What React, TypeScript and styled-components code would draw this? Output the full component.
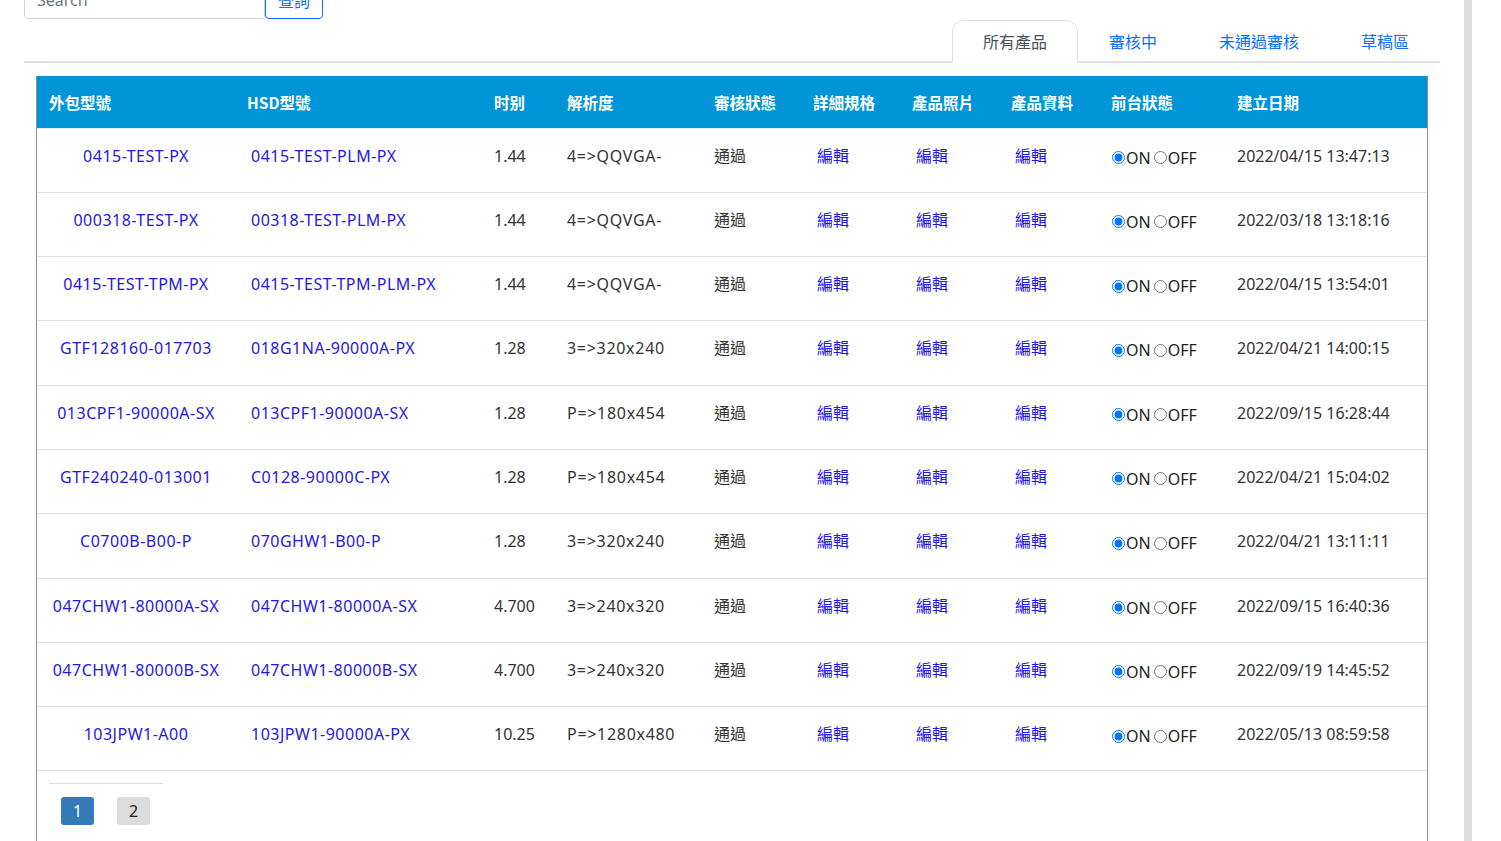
import styled, { createGlobalStyle } from 'styled-components'

const GlobalStyle = createGlobalStyle`
	html, body {
		margin: 0;
		padding: 0;
		background: #fff;
		overflow: hidden;
	}
	body {
		font-family: 'Noto Sans', 'Noto Sans CJK TC', sans-serif;
		color: #333;
		font-size: 16px;
	}
	* {
		box-sizing: border-box;
	}
`

type Producto = {
	externo: string
	hsd: string
	tamano: string
	resolucion: string
	fecha: string
}

const productos: Producto[] = [
	{ externo: '0415-TEST-PX', hsd: '0415-TEST-PLM-PX', tamano: '1.44', resolucion: '4=>QQVGA-', fecha: '2022/04/15 13:47:13' },
	{ externo: '000318-TEST-PX', hsd: '00318-TEST-PLM-PX', tamano: '1.44', resolucion: '4=>QQVGA-', fecha: '2022/03/18 13:18:16' },
	{ externo: '0415-TEST-TPM-PX', hsd: '0415-TEST-TPM-PLM-PX', tamano: '1.44', resolucion: '4=>QQVGA-', fecha: '2022/04/15 13:54:01' },
	{ externo: 'GTF128160-017703', hsd: '018G1NA-90000A-PX', tamano: '1.28', resolucion: '3=>320x240', fecha: '2022/04/21 14:00:15' },
	{ externo: '013CPF1-90000A-SX', hsd: '013CPF1-90000A-SX', tamano: '1.28', resolucion: 'P=>180x454', fecha: '2022/09/15 16:28:44' },
	{ externo: 'GTF240240-013001', hsd: 'C0128-90000C-PX', tamano: '1.28', resolucion: 'P=>180x454', fecha: '2022/04/21 15:04:02' },
	{ externo: 'C0700B-B00-P', hsd: '070GHW1-B00-P', tamano: '1.28', resolucion: '3=>320x240', fecha: '2022/04/21 13:11:11' },
	{ externo: '047CHW1-80000A-SX', hsd: '047CHW1-80000A-SX', tamano: '4.700', resolucion: '3=>240x320', fecha: '2022/09/15 16:40:36' },
	{ externo: '047CHW1-80000B-SX', hsd: '047CHW1-80000B-SX', tamano: '4.700', resolucion: '3=>240x320', fecha: '2022/09/19 14:45:52' },
	{ externo: '103JPW1-A00', hsd: '103JPW1-90000A-PX', tamano: '10.25', resolucion: 'P=>1280x480', fecha: '2022/05/13 08:59:58' },
]

const columnas = [
	{ titulo: '外包型號', ancho: 198 },
	{ titulo: 'HSD型號', ancho: 247 },
	{ titulo: '时别', ancho: 73 },
	{ titulo: '解析度', ancho: 147 },
	{ titulo: '審核狀態', ancho: 99 },
	{ titulo: '詳細規格', ancho: 99 },
	{ titulo: '產品照片', ancho: 99 },
	{ titulo: '產品資料', ancho: 100 },
	{ titulo: '前台狀態', ancho: 126 },
	{ titulo: '建立日期', ancho: 202 },
]

const pestanas = ['所有產品', '審核中', '未通過審核', '草稿區']

export default function App() {
	return (
		<>
			<GlobalStyle />
			<Pagina>
				<Contenido>
					<Buscador>
						<CampoBusqueda placeholder='Search' />
						<BotonBuscar>查詢</BotonBuscar>
					</Buscador>

					<Pestanas>
						{pestanas.map((p, i) => (
							<Pestana key={p} $activa={i === 0}>
								{p}
							</Pestana>
						))}
					</Pestanas>

					<Caja>
						<Tabla>
							<colgroup>
								{columnas.map(c => (
									<col key={c.titulo} style={{ width: c.ancho }} />
								))}
							</colgroup>
							<thead>
								<tr>
									{columnas.map(c => (
										<Th key={c.titulo}>{c.titulo}</Th>
									))}
								</tr>
							</thead>
							<tbody>
								{productos.map((p, i) => (
									<Fila key={i}>
										<Td $centrado>
											<Modelo>{p.externo}</Modelo>
										</Td>
										<Td $extra={4}>
											<Modelo>{p.hsd}</Modelo>
										</Td>
										<Td>{p.tamano}</Td>
										<Td $espaciado>{p.resolucion}</Td>
										<Td>通過</Td>
										<Td $extra={4}>
											<Enlace>編輯</Enlace>
										</Td>
										<Td $extra={4}>
											<Enlace>編輯</Enlace>
										</Td>
										<Td $extra={4}>
											<Enlace>編輯</Enlace>
										</Td>
										<Td>
											<Estado>
												<Radio type='radio' name={`estado-${i}`} defaultChecked />
												<span>ON</span>
												<Radio type='radio' name={`estado-${i}`} $separado />
												<span>OFF</span>
											</Estado>
										</Td>
										<Td>{p.fecha}</Td>
									</Fila>
								))}
							</tbody>
						</Tabla>

						<Paginacion>
							<BotonPagina $activa>1</BotonPagina>
							<BotonPagina>2</BotonPagina>
						</Paginacion>
					</Caja>
				</Contenido>
				<Riel />
			</Pagina>
		</>
	)
}

const Pagina = styled.div`
	display: flex;
	height: 841px;
	overflow: hidden;
`

const Contenido = styled.div`
	width: 1464px;
	flex-shrink: 0;
	padding: 0 24px;
	margin-top: -19px;
`

const Riel = styled.div`
	width: 8px;
	flex-shrink: 0;
	background: #dcdcdc;
`

const Buscador = styled.div`
	display: flex;
	height: 38px;
`

const CampoBusqueda = styled.input`
	width: 241px;
	height: 38px;
	border: 1px solid #ced4da;
	border-radius: 4px 0 0 4px;
	padding: 6px 12px;
	font-family: 'Noto Sans', sans-serif;
	font-size: 16px;
	color: #212529;
	outline: none;

	&::placeholder {
		color: #6c757d;
	}
`

const BotonBuscar = styled.button`
	width: 58px;
	height: 38px;
	margin-left: 0;
	border: 1px solid #0d6efd;
	border-radius: 4px;
	background: #fff;
	color: #0d6efd;
	font-family: 'Noto Sans CJK TC', sans-serif;
	font-size: 16px;
	padding: 0;
`

const Pestanas = styled.div`
	display: flex;
	justify-content: flex-end;
	margin-top: 1px;
	border-bottom: 2px solid #dee2e6;
`

const Pestana = styled.div<{ $activa?: boolean }>`
	padding: 8px 30px;
	margin-bottom: -2px;
	line-height: 24px;
	font-size: 16px;
	font-family: 'Noto Sans CJK TC', sans-serif;
	border: 1px solid ${({ $activa }) => ($activa ? '#dee2e6' : 'transparent')};
	border-bottom: 2px solid ${({ $activa }) => ($activa ? '#fff' : 'transparent')};
	border-radius: 12px 12px 0 0;
	color: ${({ $activa }) => ($activa ? '#495057' : '#0d6efd')};
	background: ${({ $activa }) => ($activa ? '#fff' : 'transparent')};
`

const Caja = styled.div`
	margin: 13px 12px 0;
	border-left: 1px solid #8f8f8f;
	border-right: 1px solid #8f8f8f;
	height: 900px;
`

const Tabla = styled.table`
	width: 1390px;
	table-layout: fixed;
	border-collapse: collapse;
`

const Th = styled.th`
	height: 52px;
	padding: 0 12px;
	background: #0095d9;
	color: #fff;
	font-family: 'Noto Sans CJK TC', sans-serif;
	font-size: 15.5px;
	font-weight: 700;
	text-align: left;
	white-space: nowrap;
	border-bottom: 1px solid #e6eef5;
`

const Fila = styled.tr`
	height: 64.3px;
	border-bottom: 1px solid #dee2e6;
`

const Td = styled.td<{ $centrado?: boolean; $extra?: number; $espaciado?: boolean }>`
	padding: 15px 12px 0 ${({ $extra }) => 12 + ($extra ?? 0)}px;
	vertical-align: top;
	line-height: 24px;
	font-size: 16px;
	color: #333;
	white-space: nowrap;
	letter-spacing: ${({ $espaciado }) => ($espaciado ? '0.7px' : '0')};
	text-align: ${({ $centrado }) => ($centrado ? 'center' : 'left')};
`

const Enlace = styled.a`
	color: #2416e8;
	cursor: pointer;
`

const Modelo = styled(Enlace)`
	letter-spacing: 0.5px;
`

const Estado = styled.label`
	display: inline-flex;
	align-items: center;
	padding-top: 2px;
	color: #222;
`

const Radio = styled.input<{ $separado?: boolean }>`
	width: 13px;
	height: 13px;
	margin: 0 1px 0 ${({ $separado }) => ($separado ? '3px' : '1px')};
	accent-color: #0075ff;
`

const Paginacion = styled.div`
	display: flex;
	gap: 23px;
	margin: 12px 0 0 12px;
	padding: 13px 0 0 12px;
	border-top: 1px solid #dedede;
	width: 114px;
`

const BotonPagina = styled.div<{ $activa?: boolean }>`
	width: 33px;
	height: 28px;
	flex-shrink: 0;
	display: flex;
	align-items: center;
	justify-content: center;
	border-radius: 3px;
	font-size: 16px;
	background: ${({ $activa }) => ($activa ? '#337ab7' : '#dcdcdc')};
	color: ${({ $activa }) => ($activa ? '#fff' : '#222')};
`
